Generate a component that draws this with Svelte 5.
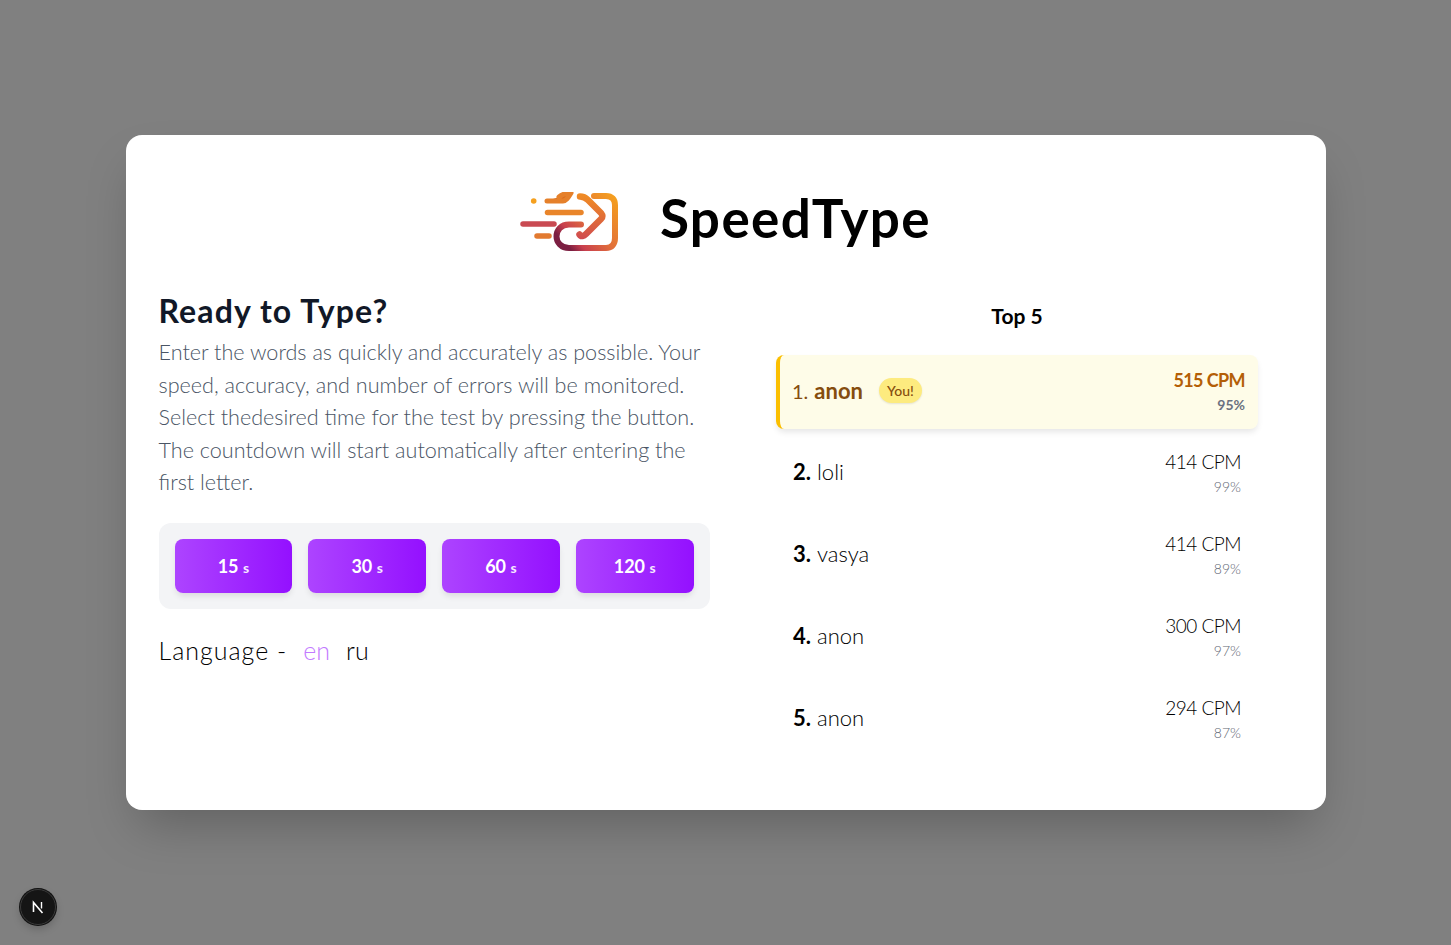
<script>
  const times = [15, 30, 60, 120];
  const rows = [
    { name: 'anon', cpm: 515, acc: 95, you: true },
    { name: 'loli', cpm: 414, acc: 99 },
    { name: 'vasya', cpm: 414, acc: 89 },
    { name: 'anon', cpm: 300, acc: 97 },
    { name: 'anon', cpm: 294, acc: 87 }
  ];
</script>

<div class="page">
  <main class="card">
    <header class="brand">
      <svg class="logo" width="100" height="60" viewBox="520 192 100 60" fill="none" stroke-linecap="round" stroke-linejoin="round" aria-hidden="true">
        <defs>
          <linearGradient id="boxGrad" gradientUnits="userSpaceOnUse" x1="615" y1="196" x2="555" y2="250">
            <stop offset="0" stop-color="#f5a01e" />
            <stop offset="0.45" stop-color="#e2703a" />
            <stop offset="0.72" stop-color="#c9404e" />
            <stop offset="0.85" stop-color="#7c1f42" />
          </linearGradient>
          <linearGradient id="arrowGrad" gradientUnits="userSpaceOnUse" x1="590" y1="197" x2="585" y2="240">
            <stop offset="0" stop-color="#ef8a25" />
            <stop offset="1" stop-color="#cf4a50" />
          </linearGradient>
        </defs>
        <circle cx="533.7" cy="201" r="2.8" fill="#f5a01e" />
        <path d="M547 201H563C566 201 568 198 571 193C566 193 562 194.5 559 197" stroke="#e5802a" stroke-width="5" fill="#d96a1c" />
        <path d="M547.5 212.5H581" stroke="#e9852a" stroke-width="5.5" />
        <path d="M523 224H554" stroke="#c94a52" stroke-width="5.5" />
        <path d="M537 236H549" stroke="#e27a30" stroke-width="5.5" />
        <path d="M580 196.5C583 196.5 586 198 588 200L601 213C603 215.5 603 217 601 219L586 234C584 236 581 237 579.5 234.5" stroke="url(#arrowGrad)" stroke-width="6.5" />
        <path d="M594 196H606C612 196 615 199.5 615 205V238C615 244 612 248 606 248H569C561 248 556.5 242 556.5 236.5C556.5 230 561 224.5 569 224.5H581" stroke="url(#boxGrad)" stroke-width="6" />
      </svg>
      <h1>SpeedType</h1>
    </header>

    <div class="columns">
      <section class="intro">
        <h2>Ready to Type?</h2>
        <p>Enter the words as quickly and accurately as possible. Your speed, accuracy, and number of errors will be monitored. Select thedesired time for the test by pressing the button. The countdown will start automatically after entering the first letter.</p>
        <div class="times">
          {#each times as t}
            <button class="time">{t} <small>s</small></button>
          {/each}
        </div>
        <div class="lang">
          <span>Language -</span>
          <button class="active">en</button>
          <button>ru</button>
        </div>
      </section>

      <section class="board">
        <h3>Top 5</h3>
        <ul>
          {#each rows as row, i}
            <li class:me={row.you}>
              <div class="who">
                <b>{i + 1}.</b>
                <span class="name">{row.name}</span>
                {#if row.you}<span class="badge">You!</span>{/if}
              </div>
              <div class="score">
                <span class="cpm">{row.cpm} CPM</span>
                <span class="acc">{row.acc}%</span>
              </div>
            </li>
          {/each}
        </ul>
      </section>
    </div>
  </main>

  <div class="devtools">
    <svg width="18" height="18" viewBox="0 0 18 18" fill="none" aria-hidden="true">
      <path d="M4.5 14V4.5L13.5 15" stroke="#fff" stroke-width="1.6" />
      <path d="M12.5 4V10.5" stroke="#fff" stroke-width="1.4" />
    </svg>
  </div>
</div>

<style>
  :global(body) {
    margin: 0;
    background: #808080;
    font-family: Lato, "Open Sans", sans-serif;
  }

  .page {
    min-height: 100vh;
    display: flex;
    align-items: center;
    justify-content: center;
    position: relative;
  }

  .card {
    box-sizing: border-box;
    width: 1200px;
    padding: 32px 33px 53.5px;
    background: #fff;
    border-radius: 16px;
    box-shadow: 0 25px 50px -12px rgba(0, 0, 0, 0.25);
  }

  .brand {
    display: flex;
    align-items: center;
    justify-content: center;
    gap: 40px;
    height: 106px;
    margin-bottom: 20.5px;
  }

  .logo {
    margin-top: 4px;
  }

  h1 {
    margin: 0 0 4px;
    font-size: 53px;
    font-weight: 700;
    line-height: 1;
    letter-spacing: 1.4px;
    color: #000;
  }

  .columns {
    display: grid;
    grid-template-columns: 551px 551px;
    gap: 32px;
  }

  h2 {
    margin: 0 0 7px;
    font-size: 32px;
    line-height: 36px;
    font-weight: 700;
    letter-spacing: 1.1px;
    color: #111827;
  }

  p {
    margin: 0 0 24px;
    font-size: 21.6px;
    line-height: 32.5px;
    font-weight: 300;
    color: #4a5565;
  }

  .times {
    display: flex;
    gap: 16px;
    padding: 16px;
    background: #f3f4f6;
    border-radius: 12px;
  }

  button {
    border: 0;
    background: none;
    padding: 0;
    font: inherit;
  }

  .time {
    flex: 1;
    height: 54px;
    color: #fff;
    font-size: 18px;
    font-weight: 700;
    border-radius: 8px;
    background: linear-gradient(to right, #ad44ff, #9410ff);
    box-shadow: 0 4px 6px -1px rgba(0, 0, 0, 0.1);
  }

  .time small {
    font-size: 14px;
    font-weight: 700;
    opacity: 0.9;
  }

  .lang {
    display: flex;
    align-items: center;
    gap: 16px;
    margin-top: 25px;
    font-size: 25px;
    font-weight: 300;
    line-height: 32px;
    letter-spacing: 1px;
    color: #000;
  }

  .lang button {
    color: #000;
  }

  .lang .active {
    color: #c27aff;
  }

  .board {
    padding-top: 8.5px;
  }

  h3 {
    margin: 0 0 25px;
    text-align: center;
    font-size: 21px;
    line-height: 28px;
    font-weight: 700;
    color: #000;
  }

  ul {
    list-style: none;
    margin: 0 auto;
    padding: 0;
    width: 482px;
    display: flex;
    flex-direction: column;
    gap: 8px;
  }

  li {
    box-sizing: border-box;
    height: 74px;
    padding: 0 17px;
    display: flex;
    align-items: center;
    justify-content: space-between;
    font-size: 22px;
    font-weight: 300;
    color: #000;
  }

  li.me {
    padding: 0 13px 0 12px;
    border-left: 4px solid #fbbf00;
    border-radius: 8px;
    background: #fefce8;
    color: #854d0e;
    font-weight: 700;
    box-shadow: 0 4px 6px -1px rgba(0, 0, 0, 0.1);
  }

  .who {
    display: flex;
    align-items: center;
    padding-bottom: 4px;
  }

  li.me .who {
    padding-bottom: 2px;
  }

  .who b {
    font-weight: 700;
    margin-right: 6px;
  }

  li.me .who b {
    font-weight: 400;
    font-size: 20px;
    margin-right: 6px;
  }

  .badge {
    margin-left: 16px;
    padding: 0 8px;
    height: 25px;
    display: flex;
    align-items: center;
    border-radius: 999px;
    background: #fdeb7f;
    color: #854d0e;
    font-size: 14px;
    font-weight: 500;
    box-shadow: 0 1px 2px rgba(0, 0, 0, 0.1);
  }

  .score {
    display: flex;
    flex-direction: column;
    align-items: flex-end;
    gap: 1px;
    padding-bottom: 3px;
  }

  .cpm {
    font-size: 19px;
    line-height: 28px;
    letter-spacing: -0.5px;
  }

  .acc {
    font-size: 14px;
    line-height: 20px;
    color: #5f6774;
  }

  li.me .cpm {
    font-size: 18px;
    letter-spacing: -0.6px;
    color: #b45f06;
    font-weight: 700;
  }

  li.me .acc {
    font-weight: 700;
    color: #6b7280;
  }

  .devtools {
    position: absolute;
    left: 20px;
    top: 889px;
    box-sizing: border-box;
    width: 36px;
    height: 36px;
    display: flex;
    align-items: center;
    justify-content: center;
    background: #151515;
    border: 1px solid #3a3a3a;
    border-radius: 50%;
    box-shadow: 0 0 0 1px #111, 0 4px 8px rgba(0, 0, 0, 0.2);
  }
</style>
